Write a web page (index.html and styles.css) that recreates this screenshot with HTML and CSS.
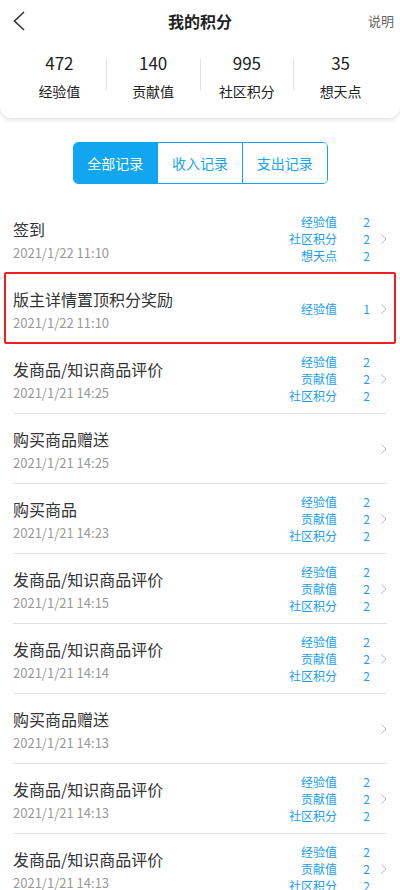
FILE: index.html
```html
<!DOCTYPE html>
<html lang="zh-CN">
<head>
    <meta charset="UTF-8">
    <title>我的积分</title>
    <link rel="stylesheet" href="styles.css">
</head>
<body>
    <div class="top-card">
        <header class="nav">
            <svg class="back" width="12" height="20" viewBox="0 0 12 20">
                <polyline points="11,1 1.5,10 11,19" fill="none" stroke="#333" stroke-width="1.6"/>
            </svg>
            <h1>我的积分</h1>
            <span class="help">说明</span>
        </header>
        <div class="stats">
            <div class="stat"><div class="num">472</div><div class="label">经验值</div></div>
            <div class="divider"></div>
            <div class="stat"><div class="num">140</div><div class="label">贡献值</div></div>
            <div class="divider"></div>
            <div class="stat"><div class="num">995</div><div class="label">社区积分</div></div>
            <div class="divider"></div>
            <div class="stat"><div class="num">35</div><div class="label">想天点</div></div>
        </div>
    </div>

    <div class="tabs">
        <button class="tab active">全部记录</button>
        <button class="tab">收入记录</button>
        <button class="tab">支出记录</button>
    </div>

    <div class="records" id="records"></div>

    <script>
        // 积分记录数据
        const records = [
            { title: '签到', time: '2021/1/22 11:10', items: [['经验值', 2], ['社区积分', 2], ['想天点', 2]] },
            { title: '版主详情置顶积分奖励', time: '2021/1/22 11:10', items: [['经验值', 1]], marked: true },
            { title: '发商品/知识商品评价', time: '2021/1/21 14:25', items: [['经验值', 2], ['贡献值', 2], ['社区积分', 2]] },
            { title: '购买商品赠送', time: '2021/1/21 14:25', items: [] },
            { title: '购买商品', time: '2021/1/21 14:23', items: [['经验值', 2], ['贡献值', 2], ['社区积分', 2]] },
            { title: '发商品/知识商品评价', time: '2021/1/21 14:15', items: [['经验值', 2], ['贡献值', 2], ['社区积分', 2]] },
            { title: '发商品/知识商品评价', time: '2021/1/21 14:14', items: [['经验值', 2], ['贡献值', 2], ['社区积分', 2]] },
            { title: '购买商品赠送', time: '2021/1/21 14:13', items: [] },
            { title: '发商品/知识商品评价', time: '2021/1/21 14:13', items: [['经验值', 2], ['贡献值', 2], ['社区积分', 2]] },
            { title: '发商品/知识商品评价', time: '2021/1/21 14:13', items: [['经验值', 2], ['贡献值', 2], ['社区积分', 2]] }
        ];

        const list = document.getElementById('records');
        const arrow = '<svg class="chevron" width="6" height="10" viewBox="0 0 6 10"><polyline points="0.5,0.5 5,5 0.5,9.5" fill="none" stroke="#bbb" stroke-width="1"/></svg>';

        records.forEach(function(r) {
            const row = document.createElement('div');
            row.className = 'record' + (r.marked ? ' marked' : '');
            let points = '';
            r.items.forEach(function(it) {
                points += '<span class="p-label">' + it[0] + '</span><span class="p-value">' + it[1] + '</span>';
            });
            row.innerHTML =
                '<div class="info"><div class="title">' + r.title + '</div><div class="time">' + r.time + '</div></div>' +
                '<div class="points">' + points + '</div>' + arrow;
            list.appendChild(row);
        });
    </script>
</body>
</html>
```

FILE: styles.css
```css
/* 基本样式 */
body {
    margin: 0;
    background: #fff;
    font-family: "Noto Sans CJK SC", "Noto Sans", sans-serif;
    color: #333;
    overflow: hidden;
}
/* 顶部卡片 */
.top-card {
    background: #fff;
    border-radius: 0 0 12px 12px;
    box-shadow: 0 2px 4px rgba(0, 0, 0, 0.13);
    padding-bottom: 17px;
}
.nav {
    height: 42px;
    display: flex;
    align-items: center;
    justify-content: center;
    position: relative;
}
.nav h1 {
    margin: 0;
    font-size: 16px;
    font-weight: bold;
    color: #222;
}
.back {
    position: absolute;
    left: 13px;
    top: 11px;
}
.help {
    position: absolute;
    right: 6px;
    top: 11px;
    font-size: 13px;
    line-height: 20px;
    color: #666;
}
/* 积分统计 */
.stats {
    display: flex;
    padding: 9px 13px 0;
}
.stat {
    flex: 1;
    text-align: center;
}
.num {
    font-size: 17px;
    line-height: 24px;
    color: #222;
}
.label {
    margin-top: 6px;
    font-size: 14px;
    line-height: 20px;
    color: #222;
}
.divider {
    width: 1px;
    height: 31px;
    margin-top: 8px;
    background: #e2e2e2;
}
/* 切换按钮 */
.tabs {
    display: flex;
    width: 255px;
    margin: 24px auto 0;
    border: 1px solid #12a6f0;
    border-radius: 5px;
    overflow: hidden;
    box-sizing: border-box;
}
.tab {
    flex: 1;
    height: 40px;
    border: none;
    background: #fff;
    color: #12a6f0;
    font-family: inherit;
    font-size: 14px;
    padding: 0;
}
.tab + .tab {
    border-left: 1px solid #12a6f0;
}
.tab.active {
    background: #12a6f0;
    color: #fff;
}
/* 记录列表 */
.records {
    margin: 20px 13px 0;
}
.record {
    height: 70px;
    box-sizing: border-box;
    border-bottom: 1px solid #e2e2e2;
    display: flex;
    align-items: center;
    position: relative;
}
.record.marked::after {
    content: "";
    position: absolute;
    top: -2px;
    bottom: -1px;
    left: -9px;
    right: -9px;
    border: 2px solid #f0201c;
    border-radius: 2px;
}
.info {
    flex: 1;
    align-self: flex-start;
    padding-top: 14px;
}
.title {
    font-size: 16px;
    line-height: 22px;
    color: #333;
}
.time {
    margin-top: 4px;
    font-size: 13px;
    line-height: 18px;
    color: #999;
}
.points {
    display: grid;
    grid-template-columns: auto 33px;
    font-size: 12px;
    line-height: 17px;
    color: #1b9ef0;
    text-align: right;
}
.chevron {
    margin-left: 11px;
}
```
